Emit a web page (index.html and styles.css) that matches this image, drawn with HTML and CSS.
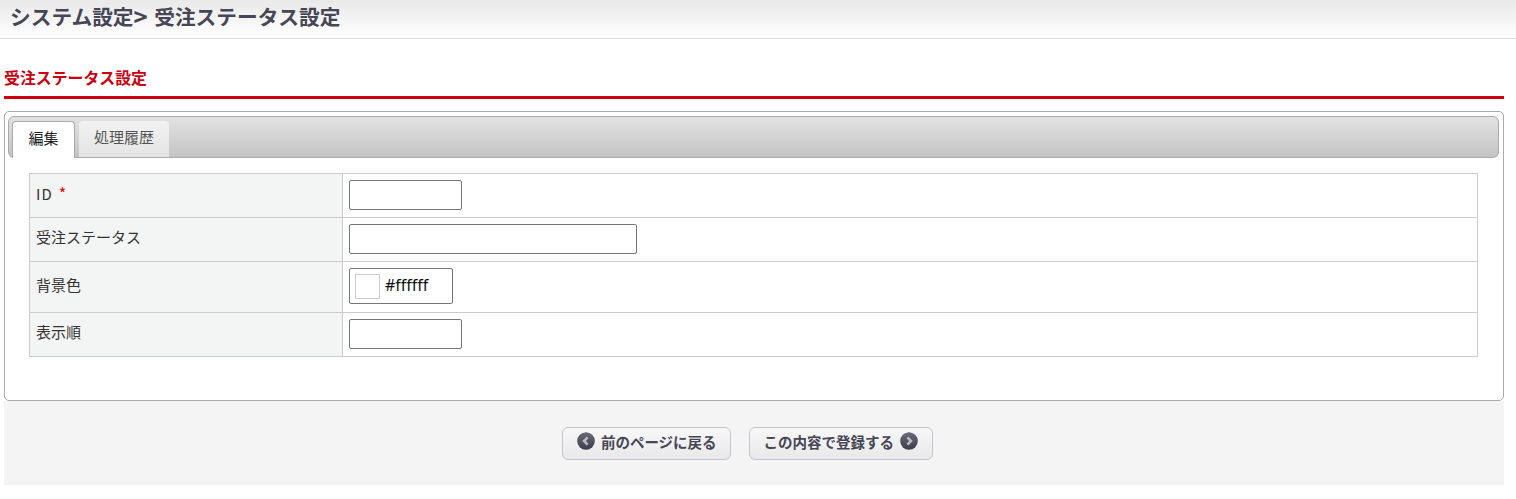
FILE: index.html
```html
<!DOCTYPE html>
<html lang="ja">
<head>
<meta charset="utf-8">
<title>受注ステータス設定</title>
<link rel="stylesheet" href="styles.css">
</head>
<body>
<header class="page-head"><h1>システム設定<span class="crumb-sep">&gt;</span> 受注ステータス設定</h1></header>
<main class="content">
  <h2 class="section-title">受注ステータス設定</h2>
  <section class="panel">
    <div class="tabs">
      <a class="tab tab-active">編集</a>
      <a class="tab">処理履歴</a>
    </div>
    <div class="tab-body">
      <table class="form-table">
        <tr class="row-a"><th><span class="id-label">ID</span><span class="req">*</span></th><td><input class="input-s" type="text"></td></tr>
        <tr class="row-a"><th>受注ステータス</th><td><input class="input-l" type="text"></td></tr>
        <tr class="row-b"><th>背景色</th><td><div class="color-field"><span class="swatch"></span><span class="color-value">#ffffff</span></div></td></tr>
        <tr class="row-a"><th>表示順</th><td><input class="input-s" type="text"></td></tr>
      </table>
    </div>
  </section>
  <footer class="actions">
    <a class="btn">
      <svg class="btn-icon" viewBox="0 0 18 18" aria-hidden="true"><defs><linearGradient id="g1" x1="0" y1="0" x2="0" y2="1"><stop offset="0" stop-color="#6a6a78"/><stop offset="1" stop-color="#3c3c4c"/></linearGradient></defs><circle cx="9" cy="9" r="8.8" fill="url(#g1)"/><path d="M10.6 5.4 7 9l3.6 3.6" fill="none" stroke="#b9b9c0" stroke-width="2.6"/></svg>
      前のページに戻る
    </a>
    <a class="btn">
      この内容で登録する
      <svg class="btn-icon" viewBox="0 0 18 18" aria-hidden="true"><defs><linearGradient id="g2" x1="0" y1="0" x2="0" y2="1"><stop offset="0" stop-color="#6a6a78"/><stop offset="1" stop-color="#3c3c4c"/></linearGradient></defs><circle cx="9" cy="9" r="8.8" fill="url(#g2)"/><path d="M7.4 5.4 11 9l-3.6 3.6" fill="none" stroke="#b9b9c0" stroke-width="2.6"/></svg>
    </a>
  </footer>
</main>
</body>
</html>
```
FILE: styles.css
```css
* { box-sizing: border-box; }
html, body { margin: 0; padding: 0; background: #fff; }
body { font-family: "Noto Sans CJK JP", "Liberation Sans", sans-serif; font-size: 15px; color: #333; }
.page-head {
  height: 39px;
  padding: 0 0 0 10px;
  background: linear-gradient(#e9e9e9, #fff);
  border-bottom: 1px solid #dcdce2;
  display: flex;
  align-items: center;
}
.page-head h1 { margin: 0 0 6px; font-size: 20.7px; line-height: 28px; font-weight: 700; color: #464655; }
.crumb-sep { display: inline-block; width: 16px; font-size: 24px; line-height: 20px; font-weight: 700; transform: translateY(1px); }
.content { padding: 0 12px 0 4px; }
.section-title {
  margin: 0;
  height: 60px;
  padding-top: 28px;
  font-size: 15.9px;
  line-height: 22px;
  font-weight: 700;
  color: #cc0011;
  border-bottom: 3px solid #cc0011;
}
.panel {
  margin-top: 12px;
  height: 290px;
  padding: 4px 4px 4px 3px;
  border: 1px solid #aaa;
  border-radius: 5px;
  background: #fff;
}
.tabs {
  height: 42px;
  padding: 4px 0 0 3px;
  display: flex;
  gap: 4px;
  border: 1px solid #aaa;
  border-radius: 6px;
  background: linear-gradient(#e2e2e2, #c4c4c4);
  width: 1491px;
}
.tab {
  width: 90px;
  height: 36px;
  padding-bottom: 6px;
  display: flex;
  align-items: center;
  justify-content: center;
  font-size: 15px;
  color: #555;
  background: linear-gradient(#f2f2f2, #e4e4e4);
  border-radius: 4px 4px 0 0;
}
.tab-active {
  width: 63px;
  height: 37px;
  background: #fff;
  color: #222;
  border: 1px solid #aaa;
  border-bottom: 0;
}
.tab-body { padding: 15px 20px 0 21px; }
.form-table {
  width: 1449px;
  border-collapse: collapse;
  table-layout: fixed;
}
.form-table th, .form-table td { border: 1px solid #ccc; padding: 0 6px; vertical-align: middle; }
.form-table td { padding-bottom: 2px; }
.form-table th {
  width: 313px;
  padding-bottom: 6px;
  background: #f3f4f4;
  text-align: left;
  font-weight: 400;
  font-size: 15px;
  color: #333;
}
.row-a { height: 44px; }
.row-b { height: 51px; }
.id-label { letter-spacing: 1px; }
.req { margin-left: 6px; font-size: 16px; color: #e00; }
input {
  display: block;
  height: 30px;
  padding: 0 4px;
  border: 1px solid #767676;
  border-radius: 2px;
  background: #fff;
  font-size: 14px;
}
.input-s { width: 113px; }
.input-l { width: 288px; }
.color-field {
  width: 104px;
  height: 36px;
  padding: 5px;
  display: flex;
  align-items: center;
  gap: 5px;
  border: 1px solid #767676;
  border-radius: 2px;
  background: #fff;
}
.swatch { width: 25px; height: 25px; border: 1px solid #ccc; background: #fff; }
.color-value { font-family: "Noto Sans", sans-serif; font-size: 16px; line-height: 20px; margin-top: -2px; color: #111; }
.actions {
  height: 84px;
  padding: 26px 13px 0 0;
  display: flex;
  justify-content: center;
  gap: 18px;
  background: #f4f4f4;
}
.btn {
  height: 33px;
  padding: 0 13.5px 5px;
  display: flex;
  align-items: center;
  gap: 6px;
  font-size: 14.5px;
  font-weight: 700;
  color: #464655;
  background: linear-gradient(#f8f8f8, #e8e8ea);
  border: 1px solid #c4c4d2;
  border-radius: 6px;
}
.btn-icon { width: 18px; height: 18px; flex: none; }
```
